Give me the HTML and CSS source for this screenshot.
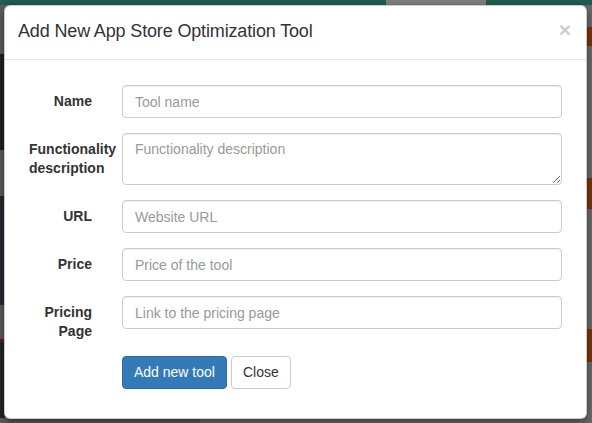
FILE: index.html
```html
<!DOCTYPE html>
<html lang="en">
  <head>
    <meta charset="UTF-8">
    <title>Add New App Store Optimization Tool</title>
    <link rel="stylesheet" href="styles.css">
  </head>
  <body>
    <div class="page">
      <div class="topbar">
        <span class="topbar-tab"></span>
      </div>
      <div class="page-main">
        <div class="side">
          <div class="blk blk-grey h-49"></div>
          <div class="blk blk-photo h-96"></div>
          <div class="blk blk-grey h-46"></div>
          <div class="blk blk-slate h-109"></div>
          <div class="blk blk-grey h-34"></div>
          <div class="blk blk-red h-3"></div>
          <div class="blk blk-dark h-76"></div>
        </div>
        <div class="actions">
          <span class="action-btn first"></span>
          <span class="action-btn second"></span>
          <span class="action-btn third"></span>
        </div>
      </div>
    </div>

    <div class="modal">
      <div class="modal-header">
        <span class="close">&times;</span>
        <h4 class="modal-title">Add New App Store Optimization Tool</h4>
      </div>
      <form class="modal-body">
        <div class="form-group">
          <label class="control-label" for="name">Name</label>
          <input class="form-control" id="name" type="text" placeholder="Tool name">
        </div>
        <div class="form-group">
          <label class="control-label" for="desc">Functionality description</label>
          <textarea class="form-control" id="desc" placeholder="Functionality description"></textarea>
        </div>
        <div class="form-group">
          <label class="control-label" for="url">URL</label>
          <input class="form-control" id="url" type="text" placeholder="Website URL">
        </div>
        <div class="form-group">
          <label class="control-label" for="price">Price</label>
          <input class="form-control" id="price" type="text" placeholder="Price of the tool">
        </div>
        <div class="form-group">
          <label class="control-label" for="pricing">Pricing Page</label>
          <input class="form-control" id="pricing" type="text" placeholder="Link to the pricing page">
        </div>
        <div class="form-actions">
          <button type="button" class="btn btn-primary">Add new tool</button>
          <button type="button" class="btn btn-default">Close</button>
        </div>
      </form>
    </div>
  </body>
</html>
```

FILE: styles.css
```css
html, body {
  margin: 0;
  height: 423px;
  overflow: hidden;
}

body {
  background-color: #6c6c6c;
  font-family: "Liberation Sans", Arial, sans-serif;
  font-size: 14px;
  color: #333;
}

/* dimmed page behind the modal */
.topbar {
  height: 5px;
  background-color: #1e5d50;
  display: flex;
}

.topbar-tab {
  margin-left: 386px;
  width: 100px;
  background-color: #7f7f7f;
}

.page-main {
  display: flex;
  justify-content: space-between;
  height: 418px;
}

.side {
  width: 200px;
  display: flex;
  flex-direction: column;
  background-color: #5e5e5e;
}

.blk-grey { background-color: #5e5e5e; }
.blk-photo { background-color: #22211f; }
.blk-slate { background-color: #272c32; }
.blk-red { background-color: #6b1c1c; }
.blk-dark { background-color: #22262a; }

.h-3 { height: 3px; }
.h-34 { height: 34px; }
.h-46 { height: 46px; }
.h-49 { height: 49px; }
.h-76 { height: 76px; }
.h-96 { height: 96px; }
.h-109 { height: 109px; }

.actions {
  width: 70px;
  display: flex;
  flex-direction: column;
}

.action-btn {
  background-color: #7b3609;
  border-radius: 3px 0 0 3px;
}

.action-btn.first {
  margin-top: 22px;
  height: 19px;
}

.action-btn.second {
  margin-top: 132px;
  height: 31px;
}

.action-btn.third {
  margin-top: 120px;
  height: 33px;
}

/* modal */
.modal {
  position: absolute;
  left: 4px;
  top: 5px;
  width: 581px;
  background-color: #fff;
  border: 1px solid rgba(0, 0, 0, 0.2);
  border-radius: 6px;
  box-shadow: 0 3px 9px rgba(0, 0, 0, 0.5);
}

.modal-header {
  padding: 13px 15px 15px 13px;
  border-bottom: 1px solid #e5e5e5;
}

.modal-title {
  margin: 0;
  font-size: 18px;
  font-weight: normal;
  line-height: 25px;
  letter-spacing: -0.15px;
}

.close {
  float: right;
  margin-top: 0;
  font-size: 21px;
  font-weight: bold;
  line-height: 1;
  color: #000;
  opacity: 0.2;
}

.modal-body {
  display: block;
  margin: 0;
  padding: 25px 24px 29px 24px;
}

.form-group {
  display: grid;
  grid-template-columns: 63px 1fr;
  column-gap: 30px;
  align-items: start;
  margin-bottom: 15px;
}

.control-label {
  min-width: 0;
  padding-top: 7px;
  font-weight: bold;
  line-height: 19px;
  text-align: right;
}

.form-control {
  display: block;
  box-sizing: border-box;
  width: 100%;
  height: 33px;
  margin: 0;
  padding: 6px 12px;
  font-family: inherit;
  font-size: 14px;
  line-height: 19px;
  color: #555;
  background-color: #fff;
  border: 1px solid #ccc;
  border-radius: 4px;
  box-shadow: inset 0 1px 1px rgba(0, 0, 0, 0.075);
}

.form-control::placeholder {
  color: #999;
}

textarea.form-control {
  height: 52px;
  resize: vertical;
}

.form-actions {
  display: flex;
  gap: 4px;
  padding-left: 93px;
}

.btn {
  height: 33px;
  padding: 6px 11px;
  font-family: inherit;
  font-size: 14px;
  line-height: 19px;
  border: 1px solid transparent;
  border-radius: 4px;
}

.btn-primary {
  color: #fff;
  background-color: #337ab7;
  border-color: #2e6da4;
}

.btn-default {
  color: #333;
  background-color: #fff;
  border-color: #ccc;
}
```
